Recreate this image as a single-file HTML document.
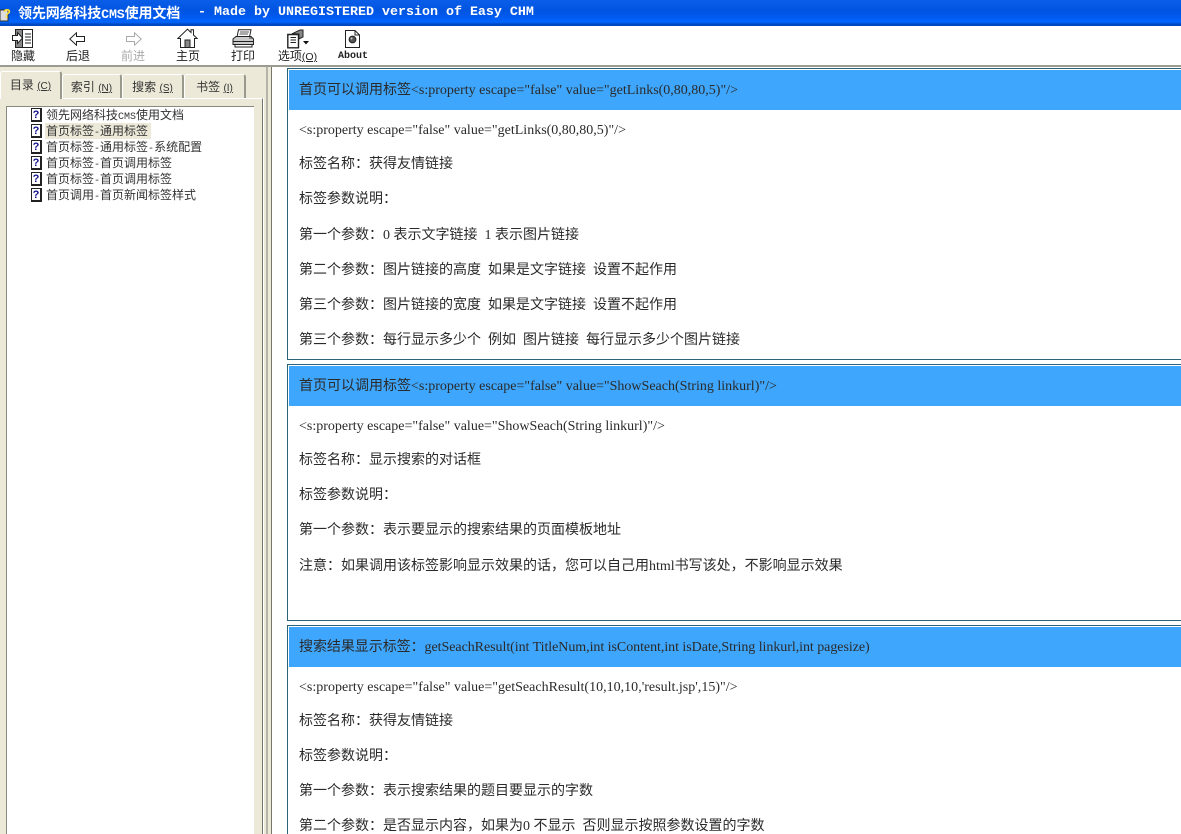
<!DOCTYPE html>
<html><head><meta charset="utf-8"><style>
html,body{margin:0;padding:0;background:#fff;width:1181px;height:834px;overflow:hidden}
body{position:relative;font-family:"Liberation Serif","Noto Sans CJK SC",serif;color:#111}
div,span,svg{position:absolute}
.i{position:static}
.t{white-space:nowrap}
.l{left:299px;font-size:14px;line-height:20px;height:20px;white-space:nowrap;color:#2a2a2a}
.h{left:289px;width:892px;background:#3ea6fc}
.b{left:287px;width:900px;border:1px solid #2a6478;border-right:none;box-sizing:border-box}
.tb{font-family:"Liberation Sans","Noto Sans CJK SC",sans-serif;font-size:12px;line-height:16px;top:47px;white-space:nowrap;text-align:center;color:#222}
.tr{left:46px;font-family:"Liberation Sans","Noto Sans CJK SC",sans-serif;font-size:12px;line-height:16px;white-space:nowrap;color:#333}
.m{position:static;font:10px "Liberation Mono",monospace}
.q{left:31px;width:11px;height:14px;background:#fff;border:1px solid #222;border-width:1px 2px 2px 1px;box-sizing:border-box;font:bold 11px/12px "Liberation Sans",sans-serif;color:#14148c;text-align:center}
.tab{background:#ece9d8;border:1px solid #fff;border-right:2px solid #9a998d;border-bottom:none;border-radius:3px 3px 0 0;box-sizing:border-box;font-family:"Liberation Sans","Noto Sans CJK SC",sans-serif;font-size:12px;line-height:24px;text-align:center;white-space:nowrap;color:#333}
.tab span{position:static;font-size:10px;text-decoration:underline}
</style></head><body>
<!-- title bar -->
<div style="left:0;top:0;width:1181px;height:26px;background:linear-gradient(#0a5ee8 0,#0054e0 40%,#0058ec 60%,#0066ff 85%,#0048c0 93%,#0048c0 100%)"></div>
<svg style="left:0;top:4px" width="16" height="18" viewBox="0 0 16 18"><path d="M0 6H8V17H0Z" fill="#ddd" stroke="#333"/><text x="3" y="14" font-size="13" font-weight="bold" font-family="Liberation Sans" fill="#ffe030">?</text></svg>
<div class="t" style="left:18px;top:4px;font:bold 14px/18px 'Liberation Sans','Noto Sans CJK SC',sans-serif;color:#fff;letter-spacing:-.15px">领先网络科技<span class="i" style="font:bold 13.33px 'Liberation Mono',monospace">CMS</span>使用文档</div>
<div class="t" style="left:198px;top:4px;font:bold 13.33px/18px 'Liberation Mono',monospace;color:#fff;white-space:pre">- Made by UNREGISTERED version of Easy CHM</div>

<!-- toolbar -->
<div style="left:0;top:65px;width:1181px;height:2px;background:#9c9b92"></div>
<svg style="left:12px;top:29px" width="22" height="19" viewBox="0 0 22 19" fill="none" stroke="#222"><path d="M3.5 .5H20.5V18.5H3.5Z" fill="#fff"/><path d="M3.5 .5H10.5V18.5H3.5Z" fill="#888"/><path d="M.5 6.5H5.5V3.5L10.5 9 5.5 14.5V11.5H.5Z" fill="#fff"/><path d="M13 5H19M13 8H19M13 11H19M13 14H19"/></svg>
<div class="tb" style="left:11px;width:24px;top:48px">隐藏</div>
<svg style="left:69px;top:32px" width="17" height="14" viewBox="0 0 17 14" fill="#fff" stroke="#222"><path d="M.8 7 7.5 .8V4.5H15.5V9.5H7.5V13.2Z"/></svg>
<div class="tb" style="left:66px;width:24px;top:48px">后退</div>
<svg style="left:125px;top:32px" width="17" height="14" viewBox="0 0 17 14" fill="#fff" stroke="#aaa"><path d="M16.2 7 9.5 .8V4.5H1.5V9.5H9.5V13.2Z"/></svg>
<div class="tb" style="left:121px;width:24px;color:#aaa;top:48px">前进</div>
<svg style="left:177px;top:28px" width="21" height="21" viewBox="0 0 21 21" fill="#fff" stroke="#222"><path d="M.8 10.5 10.5 1.2 14 4.5V1.8H16.5V7L20.2 10.5H17.5V19.5H3.5V10.5Z"/><path d="M8 19.5V12H13V19.5Z" fill="#888"/></svg>
<div class="tb" style="left:176px;width:24px;top:48px">主页</div>
<svg style="left:232px;top:29px" width="22" height="19" viewBox="0 0 22 19" stroke="#222"><path d="M6.5 .8H19L17.5 8H5Z" fill="#fff"/><path d="M8 3H17M7.5 5H16" stroke="#555"/><path d="M1 10 4 7.5H19L21.5 10V15.5H1Z" fill="#ccc"/><path d="M1 12.5H21.5" stroke="#222"/><path d="M3 15.5H20V18H3Z" fill="#fff"/><path d="M17 9H20" stroke="#444"/></svg>
<div class="tb" style="left:231px;width:24px;top:48px">打印</div>
<svg style="left:287px;top:29px" width="23" height="20" viewBox="0 0 23 20" stroke="#222"><path d="M.8 5.5H11.5V18.8H.8Z" fill="#fff" stroke-width="1.4"/><path d="M3.5 8.5H9M3.5 11H9M3.5 13.5H9" fill="none"/><path d="M5 4.8 13 1H16V8L12 10V5Z" fill="#888"/><path d="M16 12H22L19 15.5Z" fill="#111" stroke="none"/></svg>
<div class="tb" style="left:277px;width:41px;top:48px">选项<span class="i" style="font:10.5px 'Liberation Sans',sans-serif;text-decoration:underline">(O)</span></div>
<svg style="left:345px;top:30px" width="15" height="18" viewBox="0 0 15 18" stroke="#222" fill="#fff"><path d="M.5 .5H10L14.5 5V17.5H.5Z"/><path d="M10 .5V5H14.5" fill="none"/><circle cx="7.5" cy="9.5" r="3.4" fill="#555"/><circle cx="6.5" cy="8.5" r="1" fill="#ccc" stroke="none"/></svg>
<div class="tb" style="left:338px;width:30px;font:10px/16px 'Liberation Mono',monospace;top:49px;font-weight:bold">About</div>

<!-- left pane -->
<div style="left:0;top:67px;width:272px;height:767px;background:#ece9d8"></div>
<div style="left:0;top:98px;width:263px;height:736px;border-top:1px solid #fff;border-right:1px solid #77766a;box-sizing:border-box"></div>
<div style="left:263px;top:98px;width:1px;height:736px;background:#fff"></div>
<div style="left:266px;top:67px;width:2px;height:767px;background:#b5b4a8"></div>
<div style="left:271px;top:67px;width:1px;height:767px;background:#77766a"></div>
<div style="left:272px;top:67px;width:1px;height:767px;background:#fff"></div>

<div class="tab" style="left:62px;top:74px;width:60px;height:24px">索引 <span>(N)</span></div>
<div class="tab" style="left:122px;top:74px;width:62px;height:24px">搜索 <span>(S)</span></div>
<div class="tab" style="left:184px;top:74px;width:62px;height:24px">书签 <span>(I)</span></div>
<div class="tab" style="left:0;top:71px;width:62px;height:28px;line-height:26px;z-index:2">目录 <span>(C)</span></div>

<div style="left:6px;top:106px;width:248px;height:728px;background:#fff;border-left:1px solid #8a897e;border-top:1px solid #8a897e;box-sizing:border-box"></div>
<div style="left:45px;top:123px;width:106px;height:16px;background:#ece9d8"></div>
<div class="q" style="top:108px">?</div><div class="tr" style="top:107px">领先网络科技<span class="m">CMS</span>使用文档</div>
<div class="q" style="top:124px">?</div><div class="tr" style="top:123px">首页标签<span class="m">-</span>通用标签</div>
<div class="q" style="top:140px">?</div><div class="tr" style="top:139px">首页标签<span class="m">-</span>通用标签<span class="m">-</span>系统配置</div>
<div class="q" style="top:156px">?</div><div class="tr" style="top:155px">首页标签<span class="m">-</span>首页调用标签</div>
<div class="q" style="top:172px">?</div><div class="tr" style="top:171px">首页标签<span class="m">-</span>首页调用标签</div>
<div class="q" style="top:188px">?</div><div class="tr" style="top:187px">首页调用<span class="m">-</span>首页新闻标签样式</div>

<!-- boxes -->
<div class="b" style="top:68px;height:292px"></div>
<div class="h" style="top:70px;height:40px"></div>
<div class="l" style="top:81px">首页可以调用标签&lt;s:property escape="false" value="getLinks(0,80,80,5)"/&gt;</div>
<div class="l" style="top:121px">&lt;s:property escape="false" value="getLinks(0,80,80,5)"/&gt;</div>
<div class="l" style="top:155px">标签名称：获得友情链接</div>
<div class="l" style="top:190px">标签参数说明：</div>
<div class="l" style="top:226px">第一个参数：0 表示文字链接 &nbsp;1 表示图片链接</div>
<div class="l" style="top:261px">第二个参数：图片链接的高度 &nbsp;如果是文字链接 &nbsp;设置不起作用</div>
<div class="l" style="top:296px">第三个参数：图片链接的宽度 &nbsp;如果是文字链接 &nbsp;设置不起作用</div>
<div class="l" style="top:331px">第三个参数：每行显示多少个 &nbsp;例如 &nbsp;图片链接 &nbsp;每行显示多少个图片链接</div>

<div class="b" style="top:364px;height:257px"></div>
<div class="h" style="top:366px;height:40px"></div>
<div class="l" style="top:377px">首页可以调用标签&lt;s:property escape="false" value="ShowSeach(String linkurl)"/&gt;</div>
<div class="l" style="top:417px">&lt;s:property escape="false" value="ShowSeach(String linkurl)"/&gt;</div>
<div class="l" style="top:451px">标签名称：显示搜索的对话框</div>
<div class="l" style="top:486px">标签参数说明：</div>
<div class="l" style="top:521px">第一个参数：表示要显示的搜索结果的页面模板地址</div>
<div class="l" style="top:557px">注意：如果调用该标签影响显示效果的话，您可以自己用html书写该处，不影响显示效果</div>

<div class="b" style="top:625px;height:209px;border-bottom:none"></div>
<div class="h" style="top:627px;height:40px"></div>
<div class="l" style="top:638px;letter-spacing:-.05px">搜索结果显示标签：getSeachResult(int TitleNum,int isContent,int isDate,String linkurl,int pagesize)</div>
<div class="l" style="top:678px;letter-spacing:.01px">&lt;s:property escape="false" value="getSeachResult(10,10,10,'result.jsp',15)"/&gt;</div>
<div class="l" style="top:712px">标签名称：获得友情链接</div>
<div class="l" style="top:747px">标签参数说明：</div>
<div class="l" style="top:782px">第一个参数：表示搜索结果的题目要显示的字数</div>
<div class="l" style="top:817px">第二个参数：是否显示内容，如果为0 不显示 &nbsp;否则显示按照参数设置的字数</div>
</body></html>
